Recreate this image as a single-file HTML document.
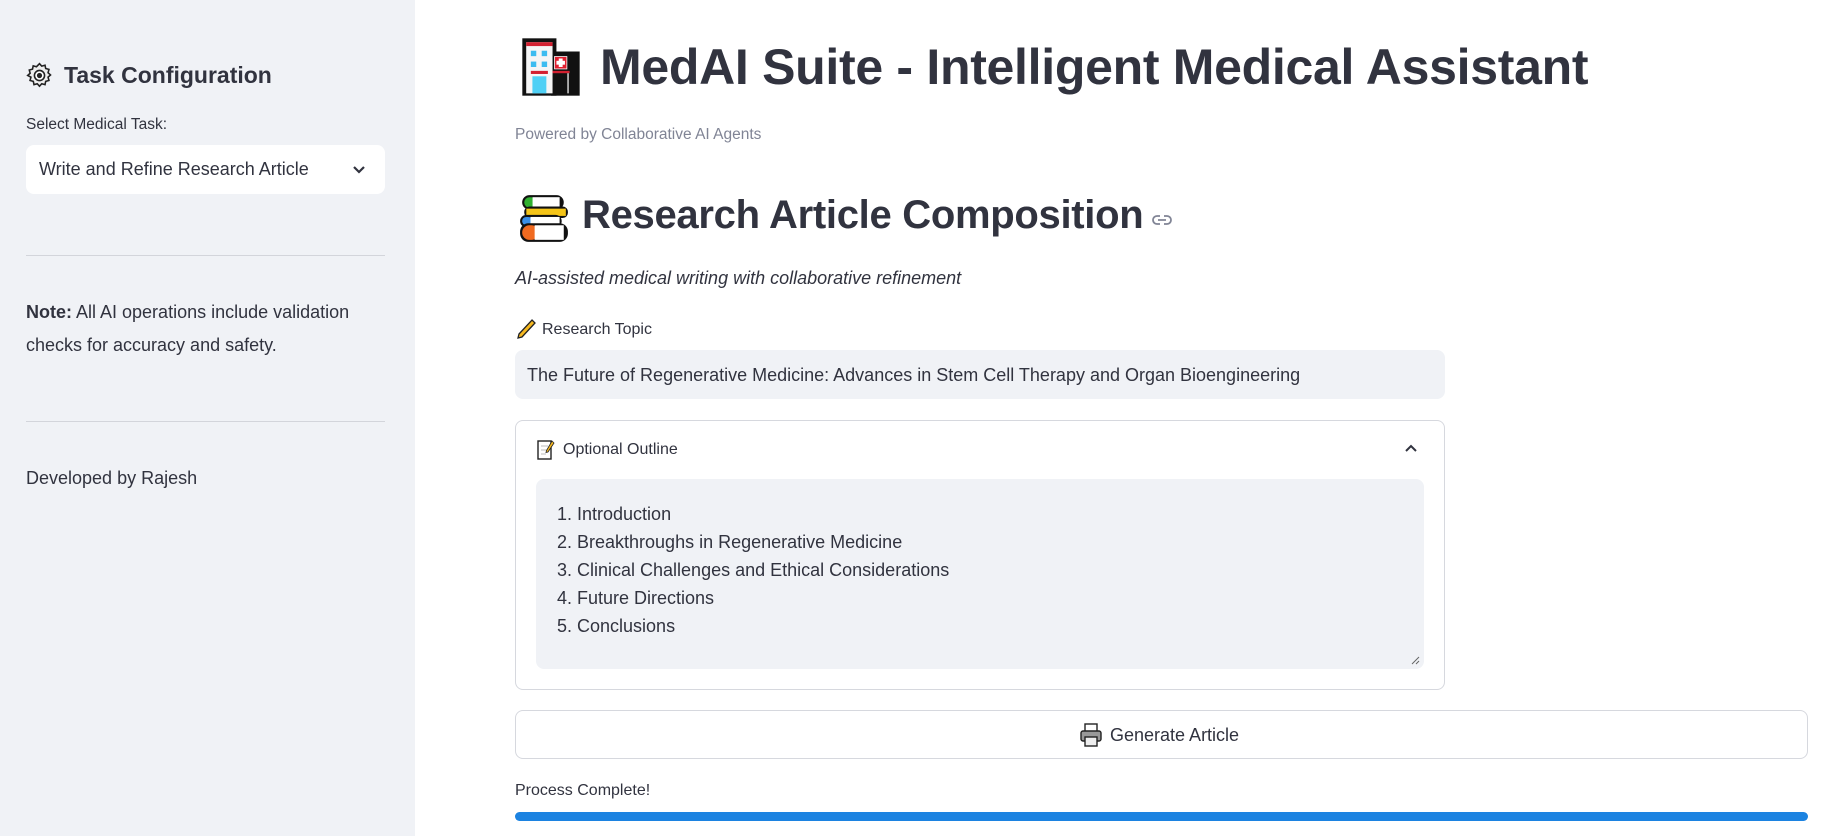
<!DOCTYPE html>
<html><head><meta charset="utf-8"><style>
*{box-sizing:border-box;margin:0;padding:0}
body{width:1836px;height:836px;overflow:hidden;background:#fff;font-family:"Liberation Sans",sans-serif;color:#31333f;position:relative}
.sb{position:absolute;left:0;top:0;width:415px;height:836px;background:#f0f2f6}
.a{position:absolute;white-space:nowrap}
.hr{position:absolute;left:26px;width:359px;height:1px;background:#d3d5db}
</style></head><body>
<div class="sb"></div>
<svg class="a" style="left:26px;top:62px" width="27" height="27" viewBox="0 0 24 24"><path d="M12 1.5l2 2.2 2.9-.8.6 2.9 2.9.8-.8 2.9 2.2 2-2.2 2 .8 2.9-2.9.8-.6 2.9-2.9-.8-2 2.2-2-2.2-2.9.8-.6-2.9-2.9-.8.8-2.9L1.5 12l2.2-2-.8-2.9 2.9-.8.6-2.9 2.9.8z" fill="#eee" stroke="#222" stroke-width="1.4"/><circle cx="12" cy="12" r="4.5" fill="#fff" stroke="#222" stroke-width="1.4"/><circle cx="12" cy="12" r="2.3" fill="#222"/></svg>
<div class="a" style="left:64px;top:62px;font-size:23px;font-weight:bold">Task Configuration</div>
<div class="a" style="left:26px;top:116px;font-size:15.5px">Select Medical Task:</div>
<div class="a" style="left:26px;top:145px;width:359px;height:49px;background:#fff;border-radius:8px"></div>
<div class="a" style="left:39px;top:159px;font-size:18px">Write and Refine Research Article</div>
<svg class="a" style="left:352px;top:165px" width="14" height="10" viewBox="0 0 14 10"><path d="M2 2l5 5 5-5" fill="none" stroke="#31333f" stroke-width="2.2"/></svg>
<div class="hr" style="top:255px"></div>
<div class="a" style="left:26px;top:296px;font-size:18px;line-height:33px;white-space:normal;width:370px"><b>Note:</b> All AI operations include validation checks for accuracy and safety.</div>
<div class="hr" style="top:421px"></div>
<div class="a" style="left:26px;top:468px;font-size:18px">Developed by Rajesh</div>
<svg class="a" style="left:520px;top:36px" width="62" height="62" viewBox="0 0 80 80"><rect x="3" y="3" width="44" height="74" fill="#111"/><rect x="40" y="20" width="37" height="57" fill="#111"/><rect x="8" y="8" width="34" height="66" fill="#f5f5f5"/><rect x="8" y="8" width="34" height="5" fill="#d32030"/><rect x="14" y="19" width="7" height="7" fill="#3cbcf0"/><rect x="28" y="19" width="7" height="7" fill="#3cbcf0"/><rect x="14" y="33" width="7" height="7" fill="#3cbcf0"/><rect x="28" y="33" width="7" height="7" fill="#3cbcf0"/><rect x="14" y="45" width="22" height="4" fill="#d32030"/><rect x="16" y="52" width="18" height="22" fill="#4fd0f5"/><rect x="44" y="26" width="17" height="17" fill="#fff"/><rect x="45" y="27" width="15" height="15" fill="#e02030"/><rect x="50" y="29" width="5" height="11" fill="#fff"/><rect x="47" y="32" width="11" height="5" fill="#fff"/><rect x="42" y="45" width="22" height="3" fill="#d32030"/><rect x="61" y="48" width="2" height="26" fill="#ccc"/></svg>
<div class="a" style="left:600px;top:38px;font-size:50px;font-weight:bold;letter-spacing:-0.3px">MedAI Suite - Intelligent Medical Assistant</div>
<div class="a" style="left:515px;top:126px;font-size:15.5px;color:#808495">Powered by Collaborative AI Agents</div>
<svg class="a" style="left:518px;top:194px" width="52" height="48" viewBox="0 0 50 46"><rect x="4" y="1" width="40" height="14" rx="7" fill="#111"/><rect x="6" y="3" width="12" height="10" rx="5" fill="#30b030"/><rect x="14" y="3" width="26" height="10" fill="#fff"/><rect x="6" y="12" width="42" height="11" rx="5" fill="#111"/><rect x="8" y="14" width="38" height="7" fill="#f5c518"/><rect x="2" y="20" width="40" height="12" rx="6" fill="#111"/><rect x="4" y="22" width="10" height="8" rx="4" fill="#3a8ee6"/><rect x="12" y="22" width="28" height="8" fill="#fff"/><rect x="2" y="28" width="46" height="18" rx="8" fill="#111"/><rect x="4" y="30" width="16" height="14" rx="7" fill="#f06a20"/><rect x="16" y="30" width="28" height="14" fill="#fff"/></svg>
<div class="a" style="left:582px;top:193px;font-size:40px;font-weight:bold;letter-spacing:-0.3px">Research Article Composition</div>
<svg class="a" style="left:1152px;top:213px" width="20" height="14" viewBox="0 0 20 14"><path d="M8 3H5a4 4 0 000 8h3M12 3h3a4 4 0 010 8h-3M6 7h8" fill="none" stroke="#808495" stroke-width="1.8"/></svg>
<div class="a" style="left:515px;top:268px;font-size:18px;font-style:italic">AI-assisted medical writing with collaborative refinement</div>
<svg class="a" style="left:516px;top:318px" width="20" height="22" viewBox="0 0 20 22"><path d="M16 2l3 3L6 19l-4 1 1-4z" fill="#f5b820" stroke="#222" stroke-width="1.3"/></svg>
<div class="a" style="left:542px;top:321px;font-size:16px">Research Topic</div>
<div class="a" style="left:515px;top:350px;width:930px;height:49px;background:#f0f2f6;border-radius:8px"></div>
<div class="a" style="left:527px;top:365px;font-size:18px">The Future of Regenerative Medicine: Advances in Stem Cell Therapy and Organ Bioengineering</div>
<div class="a" style="left:515px;top:420px;width:930px;height:270px;border:1px solid #d6d8de;border-radius:8px"></div>
<svg class="a" style="left:537px;top:439px" width="18" height="22" viewBox="0 0 18 22"><rect x="1" y="2" width="13" height="18" fill="#fff" stroke="#222" stroke-width="1.4"/><path d="M4 7h7M4 11h7M4 15h5" stroke="#bbb"/><path d="M15 2l2 2-6 9-2 .5.5-2z" fill="#f5b820" stroke="#222" stroke-width=".8"/></svg>
<div class="a" style="left:563px;top:441px;font-size:16px">Optional Outline</div>
<svg class="a" style="left:1404px;top:443px" width="14" height="10" viewBox="0 0 14 10"><path d="M2 8l5-5 5 5" fill="none" stroke="#31333f" stroke-width="2"/></svg>
<div class="a" style="left:536px;top:479px;width:888px;height:190px;background:#f0f2f6;border-radius:8px"></div>
<div class="a" style="left:557px;top:500px;font-size:18px;line-height:28px">1. Introduction<br>2. Breakthroughs in Regenerative Medicine<br>3. Clinical Challenges and Ethical Considerations<br>4. Future Directions<br>5. Conclusions</div>
<svg class="a" style="left:1410px;top:655px" width="10" height="10" viewBox="0 0 10 10"><path d="M9 2L2 9M9 6L6 9" stroke="#666" stroke-width="1"/></svg>
<div class="a" style="left:515px;top:710px;width:1293px;height:49px;border:1px solid #d6d8de;border-radius:8px"></div>
<svg class="a" style="left:1080px;top:723px" width="22" height="24" viewBox="0 0 22 24"><rect x="5" y="1" width="12" height="8" fill="#fff" stroke="#222" stroke-width="1.4"/><rect x="1" y="8" width="20" height="10" rx="2" fill="#999" stroke="#222" stroke-width="1.4"/><rect x="5" y="14" width="12" height="9" fill="#eee" stroke="#222" stroke-width="1.4"/></svg>
<div class="a" style="left:1110px;top:725px;font-size:18px">Generate Article</div>
<div class="a" style="left:515px;top:782px;font-size:16px">Process Complete!</div>
<div class="a" style="left:515px;top:812px;width:1293px;height:9px;background:#1c83e1;border-radius:5px"></div>
</body></html>
